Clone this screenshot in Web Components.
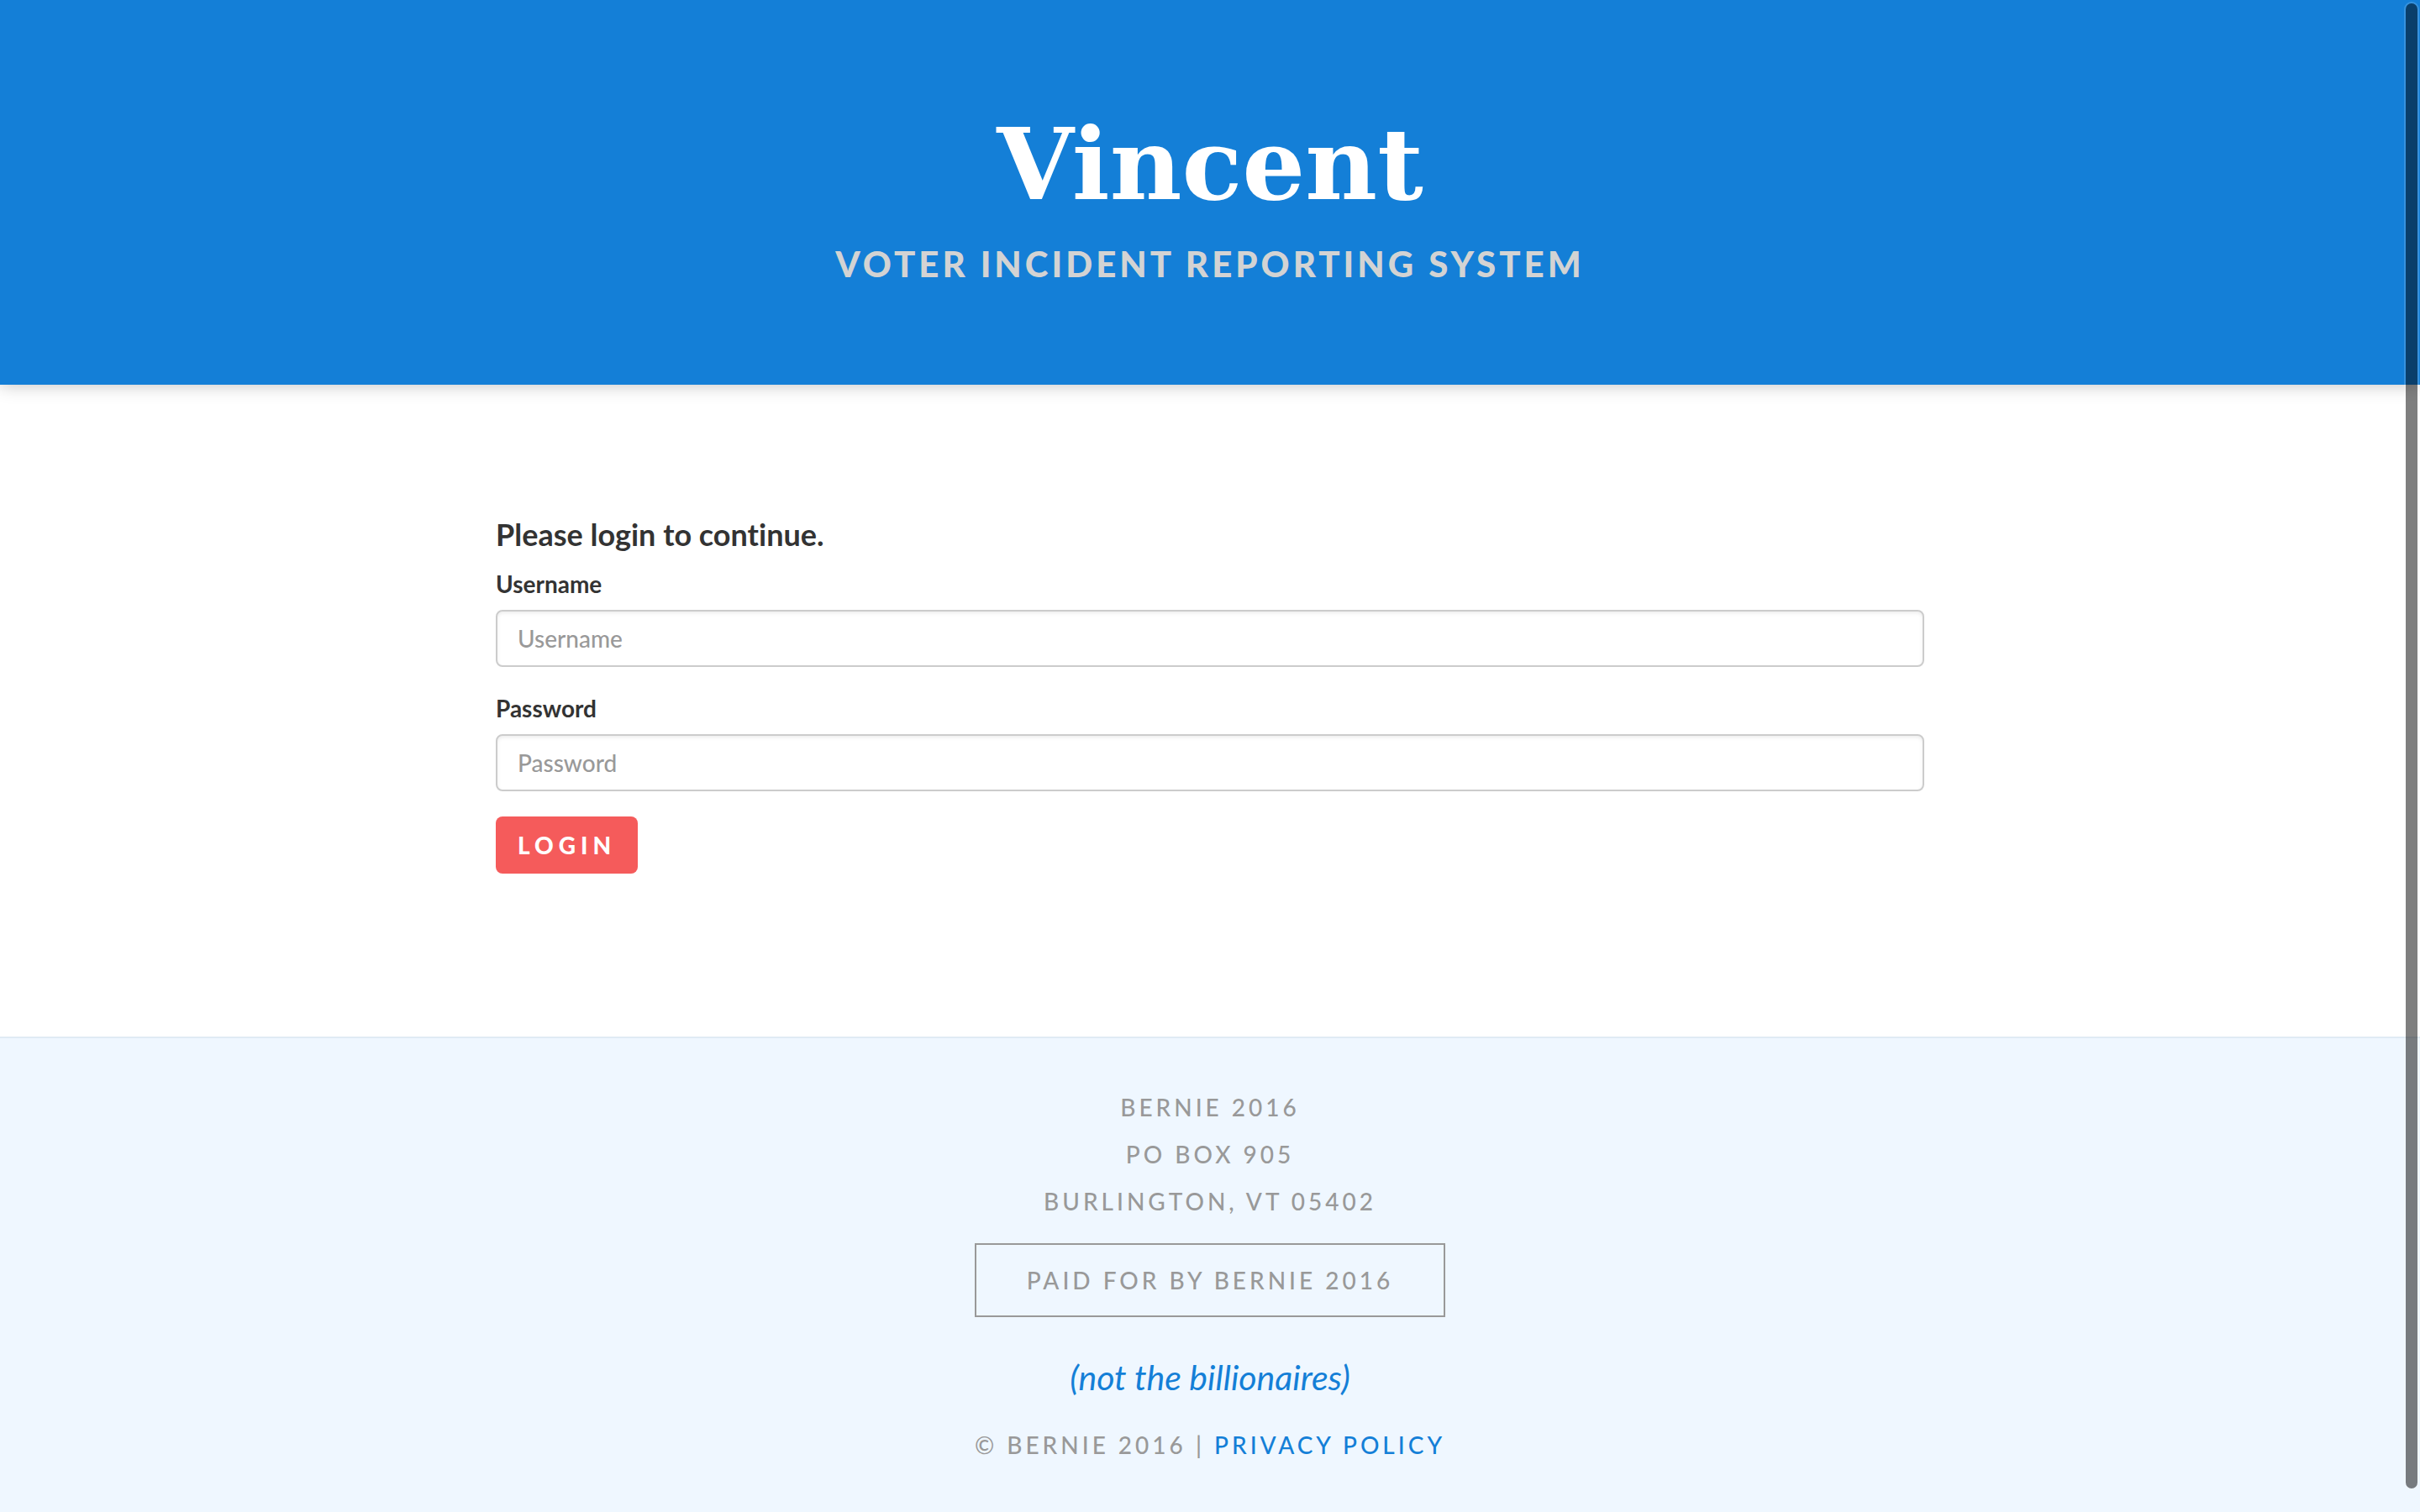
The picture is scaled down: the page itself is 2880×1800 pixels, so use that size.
<!DOCTYPE html>
<html lang="en">
<head>
<meta charset="utf-8">
<meta name="viewport" content="width=device-width, initial-scale=1">
<title>Vincent</title>
<style>
:root{
  --blue:#147fd7;
  --red:#f55b5b;
  --ink:#333;
  --muted:#999;
  --pale:#eff7ff;
}
html{height:100%}
body{margin:0;min-height:100%;display:flex;flex-direction:column;background:#fff;color:var(--ink);font-family:Lato,"Liberation Sans",sans-serif;font-size:28px;font-variant-ligatures:none}
</style>
</head>
<body>
<site-header heading="Vincent">Voter Incident Reporting System</site-header>
<login-form heading="Please login to continue."></login-form>
<site-footer>
  <span slot="address">Bernie 2016</span>
  <span slot="address">PO Box 905</span>
  <span slot="address">Burlington, VT 05402</span>
  <span slot="paid">Paid for by Bernie 2016</span>
  <span slot="note">(not the billionaires)</span>
</site-footer>
<scroll-thumb></scroll-thumb>

<script>
class BaseElement extends HTMLElement{
  constructor(){
    super();
    this.attachShadow({mode:'open'});
  }
  connectedCallback(){
    this.shadowRoot.innerHTML=this.render();
  }
}

customElements.define('site-header',class extends BaseElement{
  render(){
    return `<style>
      :host{display:block;position:relative;background:var(--blue);box-shadow:0 0 20px rgba(0,0,0,.25)}
      header{display:flex;flex-direction:column;align-items:center;gap:18px;padding:126px 30px 114px;text-align:center}
      h1{margin:0;color:#fff;font:bold 118px/140px "DejaVu Serif",serif}
      p{margin:0;color:#d3d3d3;font-size:42px;line-height:60px;font-weight:900;letter-spacing:4px;text-transform:uppercase}
    </style>
    <header><h1>${this.getAttribute('heading')}</h1><p><slot></slot></p></header>`;
  }
});

customElements.define('form-field',class extends BaseElement{
  render(){
    const label=this.getAttribute('label');
    return `<style>
      :host{display:flex;flex-direction:column;gap:12px}
      label{font-weight:700;line-height:38px}
      input{box-sizing:border-box;width:100%;height:68px;margin:0;padding:12px 24px;border:2px solid #ccc;border-radius:8px;background:#fff;color:#555;font:inherit;font-weight:500;box-shadow:inset 0 2px 4px rgba(0,0,0,.075)}
      input::placeholder{color:#999;opacity:1}
    </style>
    <label for="field">${label}</label>
    <input id="field" type="${this.getAttribute('type')||'text'}" placeholder="${label}">`;
  }
});

customElements.define('action-button',class extends BaseElement{
  render(){
    return `<style>
      :host{display:block}
      button{height:68px;padding:0 26px;border:0;border-radius:8px;background:var(--red);color:#fff;font:inherit;font-weight:900;letter-spacing:6px;text-transform:uppercase}
    </style>
    <button type="button"><slot></slot></button>`;
  }
});

customElements.define('login-form',class extends BaseElement{
  render(){
    return `<style>
      :host{display:block;padding:158px 30px 194px}
      form{display:flex;flex-direction:column;gap:30px;max-width:1700px;margin:0 auto}
      h2{margin:0 0 -10px;font-size:36px;line-height:40px;font-weight:700}
    </style>
    <form>
      <h2>${this.getAttribute('heading')}</h2>
      <form-field label="Username"></form-field>
      <form-field label="Password" type="password"></form-field>
      <action-button>Login</action-button>
    </form>`;
  }
});

customElements.define('site-footer',class extends BaseElement{
  render(){
    return `<style>
      :host{display:block;flex:1;background:var(--pale);border-top:2px solid #e0ebf4;color:var(--muted)}
      footer{display:flex;flex-direction:column;align-items:center;padding:54px 30px 50px;line-height:56px;letter-spacing:4px;font-weight:500;text-transform:uppercase;text-align:center}
      address{display:flex;flex-direction:column;font-style:normal}
      .paid{margin-top:22px;padding:14px 60px;border:2px solid var(--muted)}
      .note{margin:44px 0 24px;color:var(--blue);font-size:41px;font-style:italic;font-weight:400;letter-spacing:normal;text-transform:none}
      a{color:var(--blue);text-decoration:none}
    </style>
    <footer>
      <address><slot name="address"></slot></address>
      <div class="paid"><slot name="paid"></slot></div>
      <div class="note"><slot name="note"></slot></div>
      <div>© Bernie 2016 | <a href="#privacy">Privacy Policy</a></div>
    </footer>`;
  }
});

customElements.define('scroll-thumb',class extends BaseElement{
  render(){
    return `<style>
      :host{position:fixed;top:4px;right:3px;bottom:28px;width:14px;border-radius:7px;background:rgba(0,0,0,.5);box-shadow:0 0 0 2px rgba(255,255,255,.15);pointer-events:none}
    </style>`;
  }
});
</script>
</body>
</html>
